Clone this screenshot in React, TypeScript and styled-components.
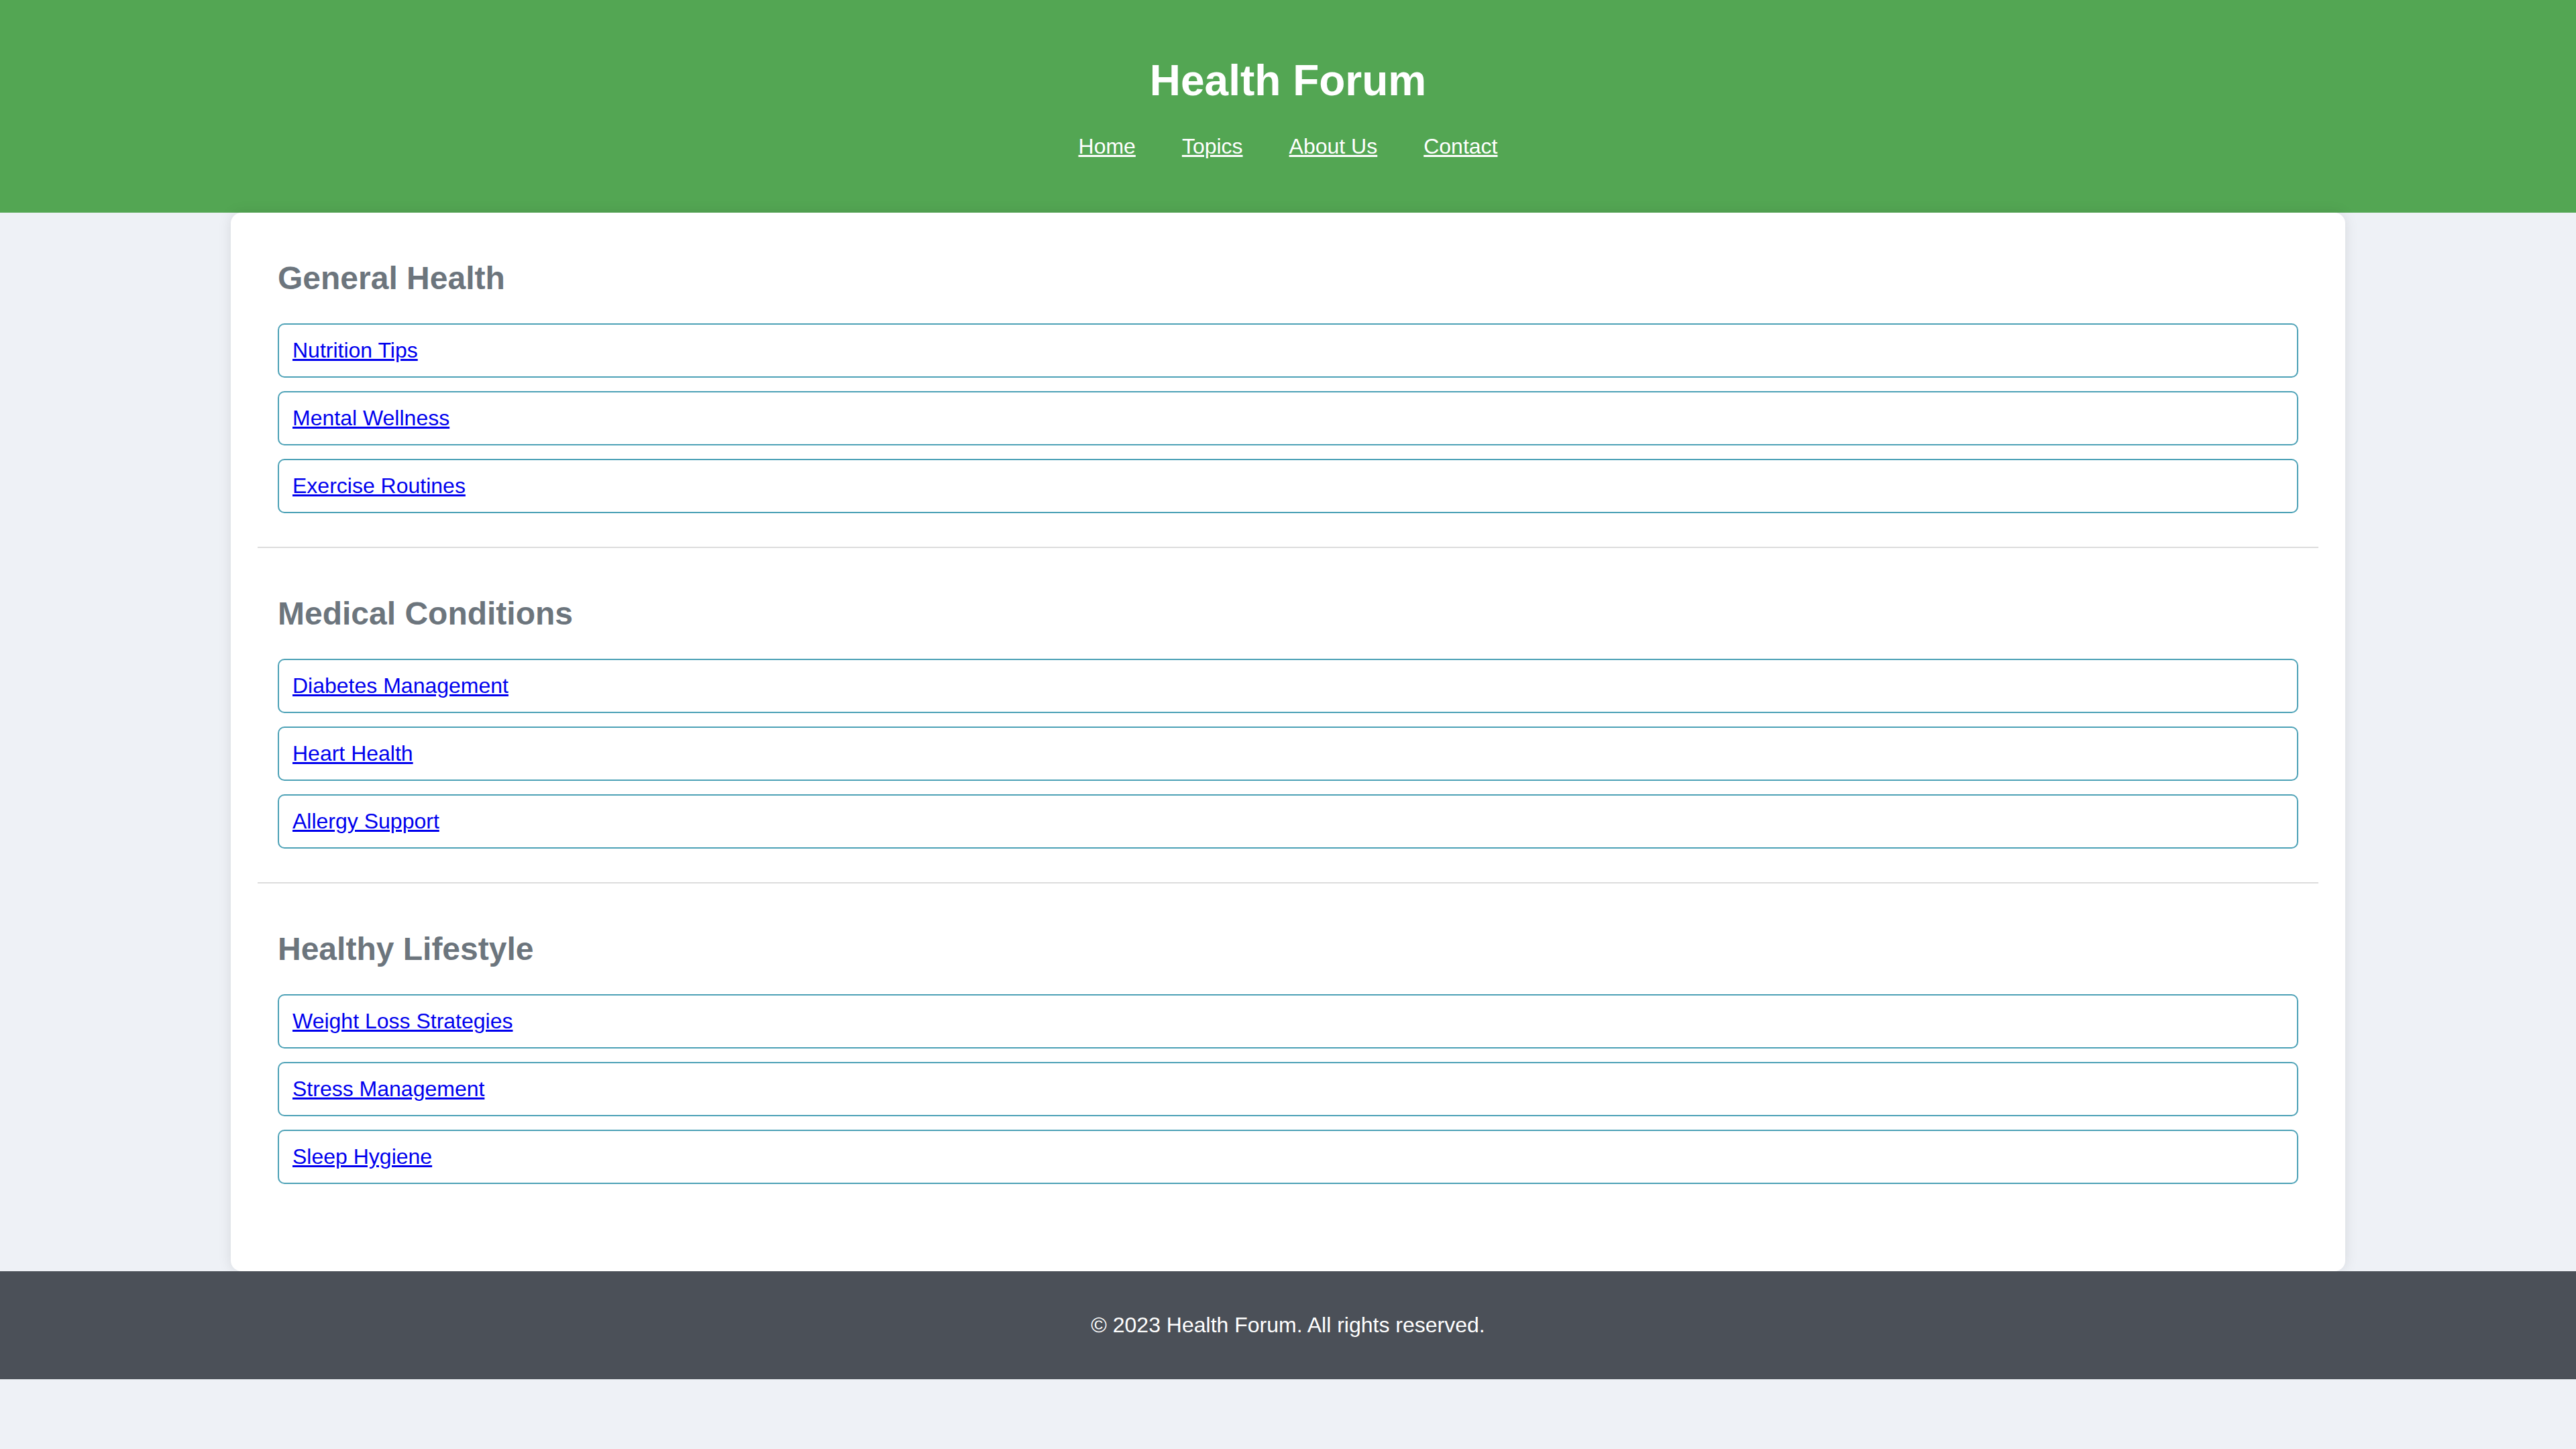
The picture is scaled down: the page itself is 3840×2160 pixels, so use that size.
import React from 'react';
import styled, { createGlobalStyle } from 'styled-components';

const GlobalStyle = createGlobalStyle`
  html,
  body {
    margin: 0;
    padding: 0;
  }
  body {
    background: #eef1f6;
    font-family: 'Liberation Sans', Arial, Helvetica, sans-serif;
    font-size: 32px;
    color: #222;
  }
`;

const sections = [
  {
    title: 'General Health',
    topics: ['Nutrition Tips', 'Mental Wellness', 'Exercise Routines'],
  },
  {
    title: 'Medical Conditions',
    topics: ['Diabetes Management', 'Heart Health', 'Allergy Support'],
  },
  {
    title: 'Healthy Lifestyle',
    topics: ['Weight Loss Strategies', 'Stress Management', 'Sleep Hygiene'],
  },
];

const navItems = ['Home', 'Topics', 'About Us', 'Contact'];

const App = (): JSX.Element => {
  return (
    <>
      <GlobalStyle />
      <Header>
        <Title>Health Forum</Title>
        <Nav>
          {navItems.map((item) => (
            <NavLink href="#" key={item}>
              {item}
            </NavLink>
          ))}
        </Nav>
      </Header>

      <Card>
        {sections.map((section) => (
          <Section key={section.title}>
            <SectionTitle>{section.title}</SectionTitle>
            <TopicList>
              {section.topics.map((topic) => (
                <TopicItem key={topic}>
                  <TopicLink href="#">{topic}</TopicLink>
                </TopicItem>
              ))}
            </TopicList>
          </Section>
        ))}
      </Card>

      <Footer>
        <p>&copy; 2023 Health Forum. All rights reserved.</p>
      </Footer>
    </>
  );
};

export default App;

const Header = styled.header`
  background: #53a653;
  color: #fff;
  text-align: center;
  padding: 40px;
`;

const Title = styled.h1`
  font-size: 64px;
  font-weight: bold;
  margin: 43px 0;
`;

const Nav = styled.nav`
  display: flex;
  justify-content: center;
  gap: 69px;
  padding-bottom: 40px;
`;

const NavLink = styled.a`
  color: #fff;
  font-size: 32px;
  text-decoration: underline;
`;

const Card = styled.main`
  width: 80%;
  margin: 0 auto;
  padding: 40px;
  background: #fff;
  border-radius: 16px;
  box-shadow: 0 0 20px rgba(0, 0, 0, 0.1);
`;

const Section = styled.section`
  padding: 30px;
  margin-bottom: 40px;
  border-bottom: 2px solid #dddddd;
  &:last-child {
    border-bottom: none;
  }
`;

const SectionTitle = styled.h2`
  font-size: 48px;
  font-weight: bold;
  color: #6c757d;
  margin: 0 0 40px;
`;

const TopicList = styled.ul`
  list-style: none;
  margin: 0;
  padding: 0;
`;

const TopicItem = styled.li`
  border: 2px solid #4ca1b6;
  border-radius: 10px;
  padding: 20px;
  margin: 20px 0;
  font-size: 32px;
`;

const TopicLink = styled.a`
  color: #0000ee;
  text-decoration: underline;
`;

const Footer = styled.footer`
  background: #4b5058;
  color: #fff;
  text-align: center;
  padding: 30px;
  font-size: 32px;
  p {
    margin: 32px 0;
  }
`;
